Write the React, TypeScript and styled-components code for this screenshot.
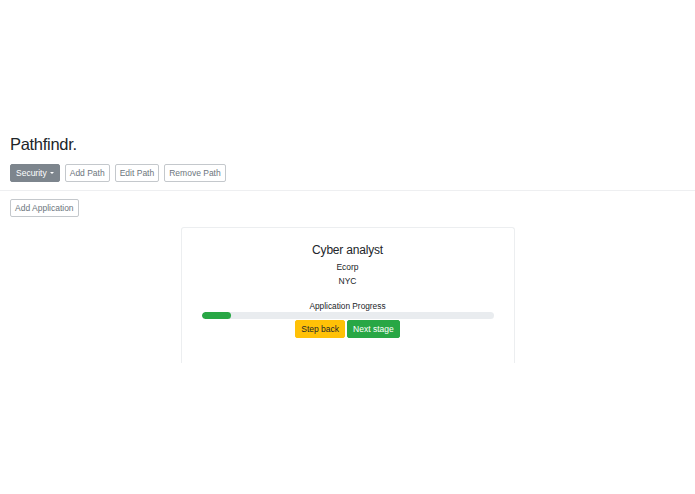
import React from "react";
import styled, { createGlobalStyle } from "styled-components";

const GlobalStyle = createGlobalStyle`
  body {
    margin: 0;
    background: #fff;
    font-family: "Liberation Sans", Arial, sans-serif;
    color: #212529;
  }
`;

const Page = styled.div`
  padding-top: 133px;
`;

const Header = styled.header`
  padding: 0 10px 8px;
  border-bottom: 1px solid #eeeff1;
`;

const Title = styled.h1`
  margin: 0 0 9px;
  font-size: 16.5px;
  line-height: 22px;
  font-weight: 500;
  letter-spacing: -0.3px;
`;

const Toolbar = styled.div`
  display: flex;
  gap: 5px;
`;

const Button = styled.button<{ $variant?: "secondary" | "outline" | "warning" | "success" }>`
  height: 18px;
  padding: 0 4px;
  font-family: inherit;
  font-size: 8.5px;
  line-height: 16px;
  border-radius: 2px;
  cursor: pointer;
  display: inline-flex;
  align-items: center;
  gap: 3px;
  ${({ $variant = "outline" }) => {
    switch ($variant) {
      case "secondary":
        return `background: #7d858d; border: 1px solid #7d858d; color: #fff; padding: 0 5px;`;
      case "warning":
        return `background: #ffc107; border: 1px solid #ffc107; color: #212529; padding: 0 5px;`;
      case "success":
        return `background: #28a745; border: 1px solid #28a745; color: #fff; padding: 0 5px;`;
      default:
        return `background: #fff; border: 1px solid #c4c8cc; color: #6c757d;`;
    }
  }}
`;

const Caret = styled.span`
  width: 0;
  height: 0;
  border-left: 2px solid transparent;
  border-right: 2px solid transparent;
  border-top: 2px solid #fff;
`;

const Content = styled.main`
  padding: 6px 10px 0;
`;

const Card = styled.section`
  width: 334px;
  height: 136px;
  box-sizing: border-box;
  margin: 10px auto 0;
  padding: 15px 20px 0;
  border: 1px solid #eceef0;
  border-bottom: none;
  border-radius: 3px 3px 0 0;
  text-align: center;
`;

const JobTitle = styled.h2`
  margin: 0 0 3px;
  font-size: 12px;
  line-height: 14px;
  font-weight: 500;
  letter-spacing: -0.2px;
`;

const Meta = styled.div`
  font-size: 8.5px;
  line-height: 14px;
  color: #212529;
`;

const ProgressLabel = styled.div`
  margin-top: 13px;
  font-size: 8.3px;
  line-height: 11px;
`;

const Track = styled.div`
  height: 7px;
  border-radius: 4px;
  background: #e9ecef;
  overflow: hidden;
`;

const Fill = styled.div`
  height: 100%;
  background: #28a745;
  border-radius: 4px;
`;

const Actions = styled.div`
  display: flex;
  justify-content: center;
  gap: 2px;
  margin-top: 1px;
`;

export default function App() {
  const progress = 10;
  return (
    <>
      <GlobalStyle />
      <Page>
        <Header>
          <Title>Pathfindr.</Title>
          <Toolbar>
            <Button $variant="secondary">
              Security <Caret />
            </Button>
            <Button>Add Path</Button>
            <Button>Edit Path</Button>
            <Button>Remove Path</Button>
          </Toolbar>
        </Header>
        <Content>
          <Button>Add Application</Button>
          <Card>
            <JobTitle>Cyber analyst</JobTitle>
            <Meta>Ecorp</Meta>
            <Meta>NYC</Meta>
            <ProgressLabel>Application Progress</ProgressLabel>
            <Track>
              <Fill style={{ width: `${progress}%` }} />
            </Track>
            <Actions>
              <Button $variant="warning">Step back</Button>
              <Button $variant="success">Next stage</Button>
            </Actions>
          </Card>
        </Content>
      </Page>
    </>
  );
}
